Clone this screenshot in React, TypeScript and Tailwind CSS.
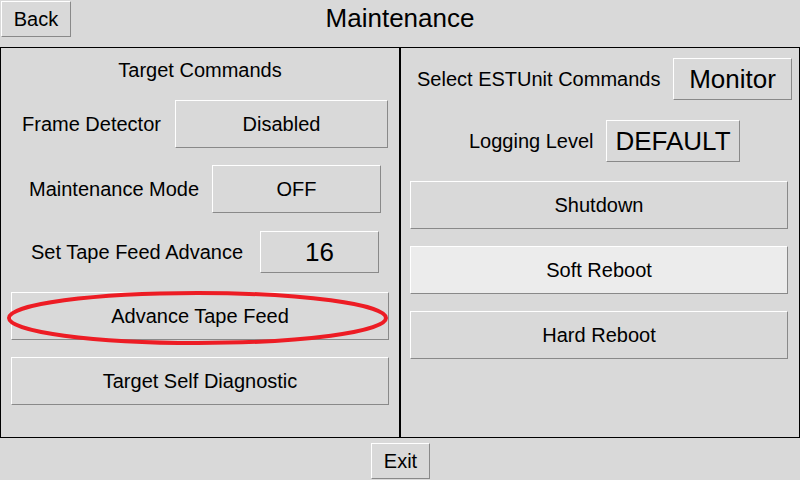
import React from "react";

const btn =
    "flex items-center justify-center border border-t-white border-l-white border-r-[#898989] border-b-[#898989] text-black";

function Btn({ label, className }: { label: string; className: string }) {
    return <div className={`${btn} ${className}`}>{label}</div>;
}

export default function App() {
    return (
        <div className="w-[800px] h-[480px] bg-[#d9d9d9] text-black text-[20px] font-['Liberation_Sans',Arial,sans-serif] overflow-hidden">
            {/* header */}
            <div className="h-[47px] grid grid-cols-[1fr_auto_1fr]">
                <div className="pl-[1px] pt-[1px]">
                    <Btn label="Back" className="w-[70px] h-[36px] bg-[#d9d9d9]" />
                </div>
                <div className="text-[26px] leading-[30px] pt-[3px]">Maintenance</div>
                <div />
            </div>

            <div className="flex h-[391px]">
                {/* left panel */}
                <div className="relative w-[400px] h-full border border-black flex flex-col">
                    <div className="mt-[10px] leading-[24px] text-center">Target Commands</div>

                    <div className="mt-[18px] flex items-center pl-[21px]">
                        <span className="w-[153px]">Frame Detector</span>
                        <Btn label="Disabled" className="w-[213px] h-[48px]" />
                    </div>
                    <div className="mt-[17px] flex items-center pl-[28px]">
                        <span className="w-[183px]">Maintenance Mode</span>
                        <Btn label="OFF" className="w-[169px] h-[48px]" />
                    </div>
                    <div className="mt-[18px] flex items-center pl-[30px]">
                        <span className="w-[229px]">Set Tape Feed Advance</span>
                        <Btn label="16" className="w-[119px] h-[42px] text-[26px]" />
                    </div>

                    <Btn label="Advance Tape Feed" className="mt-[19px] ml-[10px] w-[378px] h-[48px]" />
                    <Btn label="Target Self Diagnostic" className="mt-[17px] ml-[10px] w-[378px] h-[48px]" />

                    {/* red highlight ring */}
                    <svg className="absolute left-0 top-0 pointer-events-none" width="400" height="391">
                        <ellipse cx="196.5" cy="270" rx="188.5" ry="25" fill="none" stroke="#ed1c24" strokeWidth="4" />
                    </svg>
                </div>

                {/* right panel */}
                <div className="w-[400px] h-full border border-black flex flex-col">
                    <div className="mt-[10px] flex items-center pl-[16px]">
                        <span className="w-[256px]">Select ESTUnit Commands</span>
                        <Btn label="Monitor" className="w-[119px] h-[42px] text-[26px]" />
                    </div>
                    <div className="mt-[20px] flex items-center pl-[68px]">
                        <span className="w-[137px]">Logging Level</span>
                        <Btn label="DEFAULT" className="w-[134px] h-[42px] text-[26px]" />
                    </div>

                    <Btn label="Shutdown" className="mt-[19px] ml-[9px] w-[378px] h-[48px]" />
                    <Btn label="Soft Reboot" className="mt-[17px] ml-[9px] w-[378px] h-[48px] bg-[#ececec]" />
                    <Btn label="Hard Reboot" className="mt-[17px] ml-[9px] w-[378px] h-[48px]" />
                </div>
            </div>

            <div className="h-[42px] flex justify-center pt-[5px]">
                <Btn label="Exit" className="w-[59px] h-[36px] ml-[1px]" />
            </div>
        </div>
    );
}
